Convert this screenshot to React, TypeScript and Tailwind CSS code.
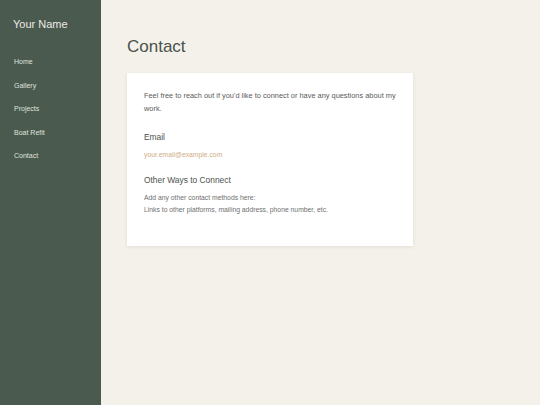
export default function App() {
  const links = ['Home', 'Gallery', 'Projects', 'Boat Refit', 'Contact'];

  return (
    <div className="flex h-[405px] w-[540px] bg-[#f4f1ea] font-['Liberation_Sans',Arial,sans-serif]">
      <aside className="w-[101px] shrink-0 bg-[#4b5a4f] pl-[13px] pt-[17px]">
        <h1 className="text-[11px] leading-[14px] text-[#ecebe3]">Your Name</h1>
        <nav className="mt-[26px] flex flex-col gap-[13.5px] pl-[1px]">
          {links.map((l) => (
            <a key={l} className="text-[7px] leading-[10px] text-[#dfe2dc]">
              {l}
            </a>
          ))}
        </nav>
      </aside>

      <main className="flex-1 pl-[26px] pt-[37px]">
        <h2 className="text-[17px] leading-[20px] text-[#4a524d]">Contact</h2>
        <div className="mt-[16px] w-[286px] bg-white px-[17px] pt-[17px] pb-[30px] shadow-[0_1px_4px_rgba(0,0,0,0.08)]">
          <p className="text-[7.4px] leading-[12.5px] text-[#5a5a5a]">
            Feel free to reach out if you'd like to connect or have any questions about my work.
          </p>

          <h3 className="mt-[16px] text-[8.4px] leading-[12px] text-[#4a524d]">Email</h3>
          <p className="mt-[7px] text-[6.8px] leading-[10px] text-[#cfae85]">your.email@example.com</p>

          <h3 className="mt-[14px] text-[8.4px] leading-[12px] text-[#4a524d]">Other Ways to Connect</h3>
          <div className="mt-[6px] text-[6.8px] leading-[12px] text-[#707070]">
            <p>Add any other contact methods here:</p>
            <p>Links to other platforms, mailing address, phone number, etc.</p>
          </div>
        </div>
      </main>
    </div>
  );
}
